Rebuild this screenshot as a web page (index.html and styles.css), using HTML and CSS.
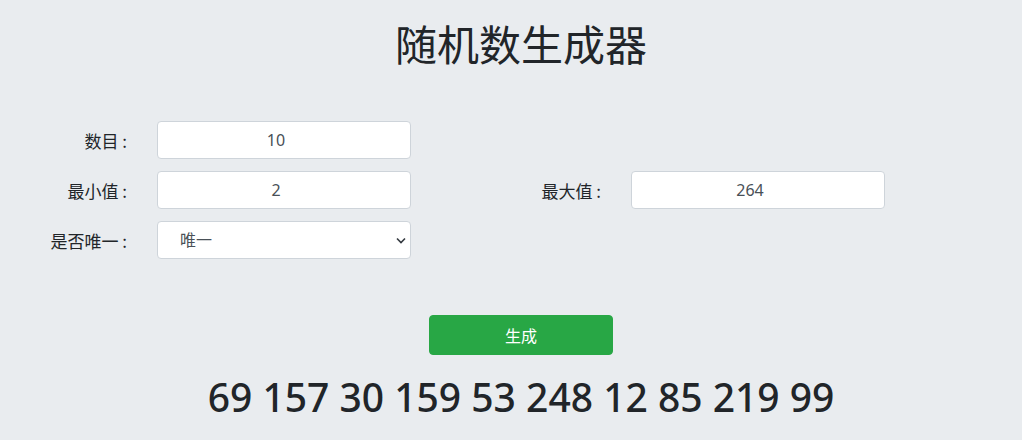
FILE: index.html
```html
<!DOCTYPE html>
<html lang="zh-CN">
<head>
    <meta charset="UTF-8">
    <meta name="viewport" content="width=device-width, initial-scale=1.0">
    <title>随机数生成器</title>
    <link rel="stylesheet" href="styles.css">
</head>
<body>
    <main class="page">
        <h1 class="title">随机数生成器</h1>
        <form class="form">
            <div class="fields">
                <label class="label row1" for="count">数目 :</label>
                <input class="field num row1" type="text" id="count" value="10">

                <label class="label row2" for="min">最小值 :</label>
                <input class="field num row2" type="text" id="min" value="2">
                <label class="label row2 second" for="max">最大值 :</label>
                <input class="field num row2 second" type="text" id="max" value="264">

                <label class="label row3" for="unique">是否唯一 :</label>
                <select class="field select row3" id="unique">
                    <option>唯一</option>
                    <option>不唯一</option>
                </select>
            </div>
            <div class="actions">
                <button type="button" class="btn">生成</button>
            </div>
        </form>
        <p class="result">69 157 30 159 53 248 12 85 219 99</p>
    </main>
</body>
</html>
```

FILE: styles.css
```css
body{
    margin: 0;
    padding: 0 0 0 20px;
    background-color: #e9ecef;
    color: #212529;
    font-family: "Noto Sans", "Noto Sans CJK SC", sans-serif;
    font-size: 16px;
}
.page{
    width: 1002px;
}
.title{
    margin: 18px 0 0;
    font-size: 42px;
    font-weight: 400;
    line-height: 50px;
    text-align: center;
    font-family: "Noto Sans CJK SC", sans-serif;
}
.form{
    width: 948px;
    margin: 53px auto 0;
}
.fields{
    display: grid;
    grid-template-columns: 80px 254px 160px 254px;
    column-gap: 30px;
    row-gap: 12px;
}
.label{
    grid-column: 1;
    align-self: center;
    text-align: right;
    font-family: "Noto Sans CJK SC", sans-serif;
    font-size: 17px;
    white-space: nowrap;
}
.label.second{
    grid-column: 3;
}
.field{
    grid-column: 2;
    height: 38px;
    box-sizing: border-box;
    border: 1px solid #ced4da;
    border-radius: 4px;
    background-color: white;
    color: #495057;
    font: 16px "Noto Sans", "Noto Sans CJK SC", sans-serif;
    padding: 0 12px;
}
.field.num{
    text-align: center;
    padding: 0 28px 0 12px;
}
.field.second{
    grid-column: 4;
}
.row1{ grid-row: 1; }
.row2{ grid-row: 2; }
.row3{ grid-row: 3; }
.select{
    appearance: none;
    padding-left: 22px;
    background-image: url("data:image/svg+xml,%3Csvg xmlns='http://www.w3.org/2000/svg' width='10' height='7' viewBox='0 0 10 7'%3E%3Cpath d='M1 1.5l4 4 4-4' fill='none' stroke='%23343a40' stroke-width='1.6'/%3E%3C/svg%3E");
    background-repeat: no-repeat;
    background-position: right 4px center;
    background-size: 10px 7px;
}
.actions{
    margin-top: 56px;
    text-align: center;
}
.btn{
    width: 184px;
    height: 40px;
    background-color: #28a745;
    color: white;
    border: 1px solid #28a745;
    border-radius: 4px;
    font: 16px "Noto Sans CJK SC", sans-serif;
    cursor: pointer;
}
.result{
    margin: 18px 0 0;
    text-align: center;
    font-size: 39px;
    font-weight: 500;
    line-height: 48px;
}
```
